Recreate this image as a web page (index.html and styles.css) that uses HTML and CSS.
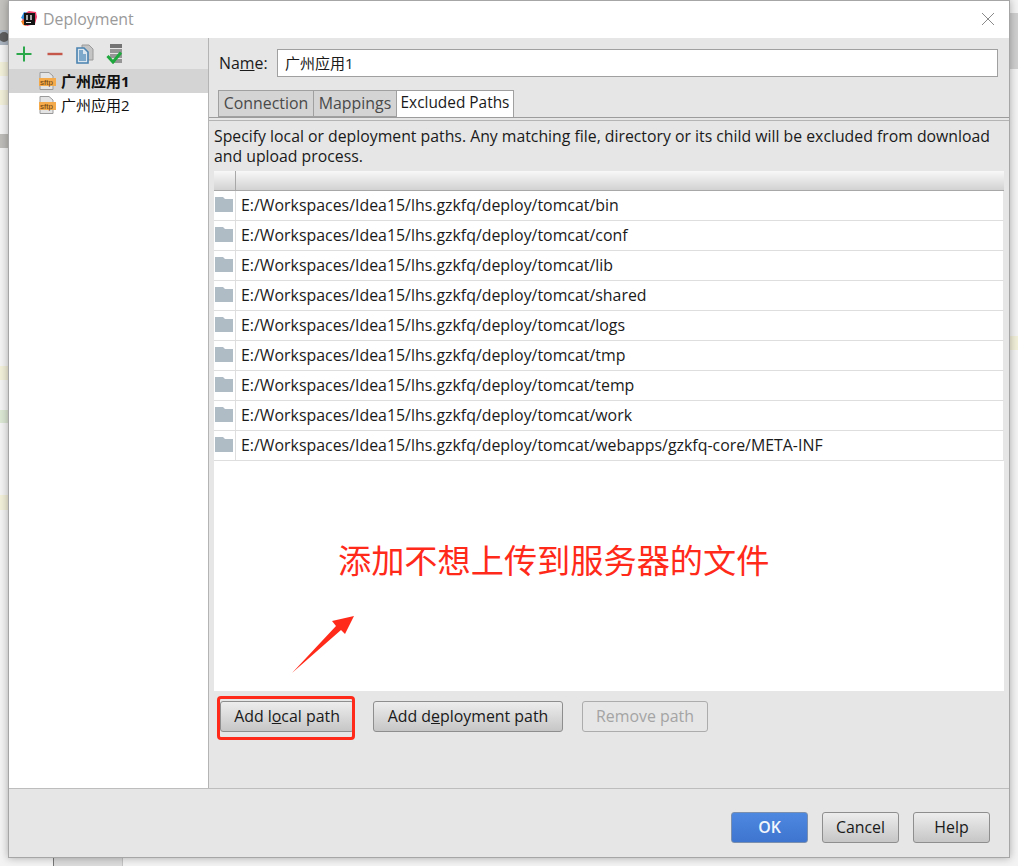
FILE: index.html
```html
<!DOCTYPE html>
<html lang="en">
  <head>
    <meta charset="UTF-8" />
    <meta name="viewport" content="width=device-width, initial-scale=1.0" />
    <title>Deployment</title>
    <link rel="stylesheet" href="styles.css">
  </head>
  <body>
    <!-- bits of the IDE behind the dialog -->
    <div class="backdrop">
      <div class="bg-band bg-top-left"></div>
      <div class="bg-band bg-gear"><div class="gear-dot"></div></div>
      <div class="bg-band bg-y1"></div>
      <div class="bg-band bg-y2"></div>
      <div class="bg-band bg-gray"></div>
      <div class="bg-band bg-y3"></div>
      <div class="bg-band bg-g1"></div>
      <div class="bg-band bg-y4"></div>
      <div class="bg-band bg-top-right"></div>
      <div class="bg-band bg-y5"></div>
      <div class="bg-band bg-bottom-tab"></div>
    </div>

    <div class="window">
      <div class="title-bar">
        <svg class="app-logo" width="16" height="16" viewBox="0 0 16 16">
          <path d="M2 3 L8 0 L15 1 L16 6 L14 13 L6 15 L1 12 Z" fill="#f0406a"/>
          <path d="M0 7 L3 1 L7 2 L4 9 Z" fill="#2f8fe0"/>
          <path d="M0 10 L4 9 L5 15 L2 14 Z" fill="#f58220"/>
          <rect x="3" y="2" width="11" height="12" fill="#141414"/>
          <rect x="5" y="11" width="5" height="1" fill="#eee"/>
          <rect x="5" y="4" width="2" height="5" fill="#aaa"/>
          <rect x="9" y="4" width="2" height="5" fill="#aaa"/>
        </svg>
        <span class="title-text">Deployment</span>
        <svg class="close-icon" width="14" height="14" viewBox="0 0 14 14">
          <path d="M1 1 L13 13 M13 1 L1 13" stroke="#8a8a8a" stroke-width="1" fill="none"/>
        </svg>
      </div>

      <div class="dialog-body">
        <div class="sidebar">
          <div class="toolbar">
            <svg width="16" height="16" viewBox="0 0 16 16">
              <path d="M8 0.5 V15.5 M0.5 8 H15.5" stroke="#2aa84a" stroke-width="2" fill="none"/>
            </svg>
            <svg class="tool-minus" width="16" height="16" viewBox="0 0 16 16">
              <path d="M0.5 8 H15.5" stroke="#c4574a" stroke-width="2.4" fill="none"/>
            </svg>
            <svg class="tool-copy" width="18" height="20" viewBox="0 0 18 20">
              <path d="M6 1 H13 L17 5 V16 H6 Z" fill="#c4c4c4" stroke="#9a9a9a"/>
              <path d="M1 4 H8 L12 8 V19 H1 Z" fill="#dbe6ef" stroke="#4a83b0" stroke-width="1.6"/>
              <path d="M3 9 V17 H10 V10 H7 V6 H3 Z" fill="#7fa9ca"/>
            </svg>
            <svg class="tool-check" width="18" height="20" viewBox="0 0 18 20">
              <rect x="4" y="0" width="12" height="4" fill="#737373"/>
              <rect x="4" y="5" width="12" height="4" fill="#969696"/>
              <rect x="4" y="10" width="12" height="4" fill="#969696"/>
              <rect x="8" y="15" width="8" height="4" fill="#969696"/>
              <path d="M1.5 12 L7 18 L15 8.5" stroke="#1fa83d" stroke-width="3" fill="none"/>
            </svg>
          </div>
          <div class="server-row selected">
            <svg class="sftp-icon" width="17" height="18" viewBox="0 0 17 18">
              <path d="M1 0.5 H10 L14 4 V17.5 H1 Z" fill="#e4e4e4" stroke="#9a9a9a"/>
              <rect x="0" y="6" width="17" height="8" fill="#f4a94a"/>
              <text x="1" y="12.5" class="sftp-text">sftp</text>
            </svg>
            <span>广州应用1</span>
          </div>
          <div class="server-row">
            <svg class="sftp-icon" width="17" height="18" viewBox="0 0 17 18">
              <path d="M1 0.5 H10 L14 4 V17.5 H1 Z" fill="#e4e4e4" stroke="#9a9a9a"/>
              <rect x="0" y="6" width="17" height="8" fill="#f4a94a"/>
              <text x="1" y="12.5" class="sftp-text">sftp</text>
            </svg>
            <span>广州应用2</span>
          </div>
        </div>

        <div class="main-pane">
          <div class="name-row">
            <label class="name-label">Na<u>m</u>e:</label>
            <div class="name-input">广州应用1</div>
          </div>

          <div class="tab-strip">
            <div class="tab tab-connection">Connection</div>
            <div class="tab tab-mappings">Mappings</div>
            <div class="tab tab-excluded active">Excluded Paths</div>
          </div>

          <div class="tab-content">
            <p class="hint">Specify local or deployment paths. Any matching file, directory or its child will be excluded from download and upload process.</p>

            <div class="path-table">
              <div class="table-head"><div class="head-cell"></div></div>
              <div class="path-row"><div class="icon-cell"><svg class="folder" width="18" height="15" viewBox="0 0 18 15"><path d="M0 0 H8 L10 2 H18 V15 H0 Z" fill="#b0bcc5"/></svg></div><div class="path-cell">E:/Workspaces/Idea15/lhs.gzkfq/deploy/tomcat/bin</div></div>
              <div class="path-row"><div class="icon-cell"><svg class="folder" width="18" height="15" viewBox="0 0 18 15"><path d="M0 0 H8 L10 2 H18 V15 H0 Z" fill="#b0bcc5"/></svg></div><div class="path-cell">E:/Workspaces/Idea15/lhs.gzkfq/deploy/tomcat/conf</div></div>
              <div class="path-row"><div class="icon-cell"><svg class="folder" width="18" height="15" viewBox="0 0 18 15"><path d="M0 0 H8 L10 2 H18 V15 H0 Z" fill="#b0bcc5"/></svg></div><div class="path-cell">E:/Workspaces/Idea15/lhs.gzkfq/deploy/tomcat/lib</div></div>
              <div class="path-row"><div class="icon-cell"><svg class="folder" width="18" height="15" viewBox="0 0 18 15"><path d="M0 0 H8 L10 2 H18 V15 H0 Z" fill="#b0bcc5"/></svg></div><div class="path-cell">E:/Workspaces/Idea15/lhs.gzkfq/deploy/tomcat/shared</div></div>
              <div class="path-row"><div class="icon-cell"><svg class="folder" width="18" height="15" viewBox="0 0 18 15"><path d="M0 0 H8 L10 2 H18 V15 H0 Z" fill="#b0bcc5"/></svg></div><div class="path-cell">E:/Workspaces/Idea15/lhs.gzkfq/deploy/tomcat/logs</div></div>
              <div class="path-row"><div class="icon-cell"><svg class="folder" width="18" height="15" viewBox="0 0 18 15"><path d="M0 0 H8 L10 2 H18 V15 H0 Z" fill="#b0bcc5"/></svg></div><div class="path-cell">E:/Workspaces/Idea15/lhs.gzkfq/deploy/tomcat/tmp</div></div>
              <div class="path-row"><div class="icon-cell"><svg class="folder" width="18" height="15" viewBox="0 0 18 15"><path d="M0 0 H8 L10 2 H18 V15 H0 Z" fill="#b0bcc5"/></svg></div><div class="path-cell">E:/Workspaces/Idea15/lhs.gzkfq/deploy/tomcat/temp</div></div>
              <div class="path-row"><div class="icon-cell"><svg class="folder" width="18" height="15" viewBox="0 0 18 15"><path d="M0 0 H8 L10 2 H18 V15 H0 Z" fill="#b0bcc5"/></svg></div><div class="path-cell">E:/Workspaces/Idea15/lhs.gzkfq/deploy/tomcat/work</div></div>
              <div class="path-row"><div class="icon-cell"><svg class="folder" width="18" height="15" viewBox="0 0 18 15"><path d="M0 0 H8 L10 2 H18 V15 H0 Z" fill="#b0bcc5"/></svg></div><div class="path-cell">E:/Workspaces/Idea15/lhs.gzkfq/deploy/tomcat/webapps/gzkfq-core/META-INF</div></div>
            </div>

            <div class="path-actions">
              <button class="btn btn-local">Add l<u>o</u>cal path</button>
              <button class="btn btn-deploy">Add d<u>e</u>ployment path</button>
              <button class="btn btn-remove" disabled>Remove path</button>
            </div>
          </div>
        </div>
      </div>

      <div class="footer">
        <button class="btn btn-footer btn-ok">OK</button>
        <button class="btn btn-footer">Cancel</button>
        <button class="btn btn-footer">Help</button>
      </div>

      <!-- red annotations drawn over the screenshot -->
      <div class="note-text">添加不想上传到服务器的文件</div>
      <svg class="note-arrow" width="64" height="60" viewBox="0 0 64 60">
        <path d="M1 58 L45 11 L41 6 L63 1 L54 19 L50 15 Z" fill="#ff2a1a"/>
      </svg>
      <div class="note-box"></div>
    </div>
  </body>
</html>
```

FILE: styles.css
```css
* {
  margin: 0;
  padding: 0;
  box-sizing: border-box;
}

html, body {
  height: 866px;
  overflow: hidden;
}

body {
  position: relative;
  background-color: #f3f3f3;
  font-family: "Open Sans", "Noto Sans CJK SC", sans-serif;
  font-size: 15.9px;
  color: #1a1a1a;
}

/* IDE behind the dialog */
.bg-band {
  position: absolute;
}

.bg-top-left { left: 0; top: 0; width: 8px; height: 30px; background: #c4c2be; }
.bg-gear { left: 0; top: 30px; width: 8px; height: 15px; background: #a9b3bf; }
.bg-y1 { left: 0; top: 62px; width: 8px; height: 14px; background: #f1efd8; }
.bg-y2 { left: 0; top: 90px; width: 8px; height: 15px; background: #f1efd8; }
.bg-gray { left: 0; top: 134px; width: 8px; height: 14px; background: #bebcb9; }
.bg-y3 { left: 0; top: 366px; width: 8px; height: 14px; background: #f1efd8; }
.bg-g1 { left: 0; top: 410px; width: 8px; height: 13px; background: #dbe6d3; }
.bg-y4 { left: 0; top: 495px; width: 8px; height: 15px; background: #f1efd8; }
.bg-top-right { right: 0; top: 13px; width: 8px; height: 56px; background: #cfcfcf; }
.bg-y5 { right: 0; top: 336px; width: 8px; height: 14px; background: #f1efd8; }
.bg-bottom-tab { left: 53px; top: 850px; width: 70px; height: 16px; background: #dcdcdc; border-left: 1px solid #777; border-right: 1px solid #c4c4c4; }

.gear-dot {
  width: 10px;
  height: 10px;
  margin: 2px 0 0 -1px;
  background-color: #5e5e5e;
  border-radius: 50%;
}

.window {
  position: relative;
  margin-left: 8px;
  width: 1002px;
  height: 858px;
  display: flex;
  flex-direction: column;
  background-color: #e6e6e6;
  border: 1px solid #a6a6a6;
  box-shadow: 0 0 8px rgba(0, 0, 0, 0.3);
}

.title-bar {
  height: 37px;
  display: flex;
  align-items: center;
  padding: 0 0 2px 12px;
  background-color: #fff;
}

.app-logo {
  flex: none;
}

.title-text {
  margin-left: 6px;
  color: #9a9a9a;
}

.close-icon {
  margin-left: auto;
  margin-right: 14px;
}

.dialog-body {
  flex: 1;
  display: flex;
  min-height: 0;
}

.sidebar {
  width: 200px;
  background-color: #fff;
  border-right: 1px solid #b4b4b4;
}

.toolbar {
  height: 31px;
  display: flex;
  align-items: center;
  padding-left: 7px;
  background-color: #e6e6e6;
}

.tool-minus { margin-left: 15px; }
.tool-copy { margin-left: 13px; }
.tool-check { margin-left: 12px; }

.server-row {
  height: 24px;
  display: flex;
  align-items: center;
  gap: 5px;
  padding: 0 0 1px 30px;
  font-size: 15px;
  color: #111;
}

.server-row.selected {
  background-color: #d4d4d4;
  font-weight: bold;
}

.sftp-icon {
  flex: none;
}

.sftp-text {
  font-family: "Liberation Sans", sans-serif;
  font-size: 8px;
  font-weight: normal;
  fill: #6a4210;
}

.main-pane {
  flex: 1;
  display: flex;
  flex-direction: column;
  min-width: 0;
}

.name-row {
  height: 52px;
  display: flex;
  align-items: center;
  padding: 0 10px 2px 10px;
}

.name-label {
  width: 58px;
}

.name-input {
  width: 721px;
  height: 28px;
  line-height: 26px;
  padding-left: 7px;
  font-size: 15px;
  background-color: #fff;
  border: 1px solid #a0a0a0;
}

.tab-strip {
  height: 28px;
  display: flex;
  padding-left: 9px;
  border-bottom: 1px solid #9c9c9c;
}

.tab {
  height: 27px;
  line-height: 24px;
  text-align: center;
  white-space: nowrap;
  color: #4a4a4a;
  background-color: #d4d4d4;
  border: 1px solid #a0a0a0;
  border-right: none;
}

.tab-connection { width: 95px; }
.tab-mappings { width: 83px; }
.tab-excluded { width: 118px; font-size: 15.4px; }

.tab.active {
  color: #1a1a1a;
  background-color: #fff;
  border-right: 1px solid #a0a0a0;
  border-bottom: none;
}

.tab-content {
  flex: 1;
  padding: 0 5px 0 5px;
  margin-top: 2px;
  border-top: 1px solid #b4b4b4;
}

.hint {
  height: 50px;
  padding-top: 5px;
  font-size: 15.8px;
  line-height: 20px;
}

.path-table {
  height: 520px;
  background-color: #fff;
}

.table-head {
  height: 20px;
  background: linear-gradient(#f8f8f8, #d2d2d2);
  border-bottom: 1px solid #a8a8a8;
}

.head-cell {
  width: 22px;
  height: 19px;
  border-right: 1px solid #a8a8a8;
}

.path-row {
  height: 30px;
  display: flex;
  border-bottom: 1px solid #dedede;
  border-right: 1px solid #e6e6e6;
}

.icon-cell {
  width: 22px;
  flex: none;
  padding: 6px 0 0 1px;
  border-right: 1px solid #dedede;
}

.folder {
  display: block;
}

.path-cell {
  line-height: 29px;
  padding-left: 5px;
  white-space: nowrap;
}

.path-actions {
  display: flex;
  padding: 10px 0 0 6px;
}

.btn {
  height: 31px;
  padding-bottom: 2px;
  font-family: inherit;
  font-size: 15.9px;
  color: #1a1a1a;
  background: linear-gradient(#ededed, #c6c6c6);
  border: 1px solid #8e8e8e;
  border-radius: 3px;
}

.btn-local { width: 134px; }
.btn-deploy { width: 190px; margin-left: 19px; }

.btn-remove {
  width: 126px;
  margin-left: 19px;
  color: #a4a4a4;
  background: #e6e6e6;
  border-color: #acacac;
}

.footer {
  height: 69px;
  display: flex;
  justify-content: flex-end;
  gap: 14px;
  padding: 23px 19px 0 0;
  border-top: 1px solid #bdbdbd;
}

.btn-footer {
  width: 77px;
}

.btn-ok {
  font-weight: 600;
  color: #f2f6fc;
  background: linear-gradient(#4d88e0, #3e75cf);
  border-color: #7a8fae;
}

/* annotations */
.note-text {
  position: absolute;
  left: 329px;
  top: 536px;
  font-family: "Noto Sans CJK SC", sans-serif;
  font-size: 33.2px;
  line-height: 44px;
  color: #ff2a1a;
  white-space: nowrap;
}

.note-arrow {
  position: absolute;
  left: 282px;
  top: 614px;
}

.note-box {
  position: absolute;
  left: 208px;
  top: 695px;
  width: 138px;
  height: 44px;
  border: 3px solid #ff2a1a;
  border-radius: 4px;
}
```
